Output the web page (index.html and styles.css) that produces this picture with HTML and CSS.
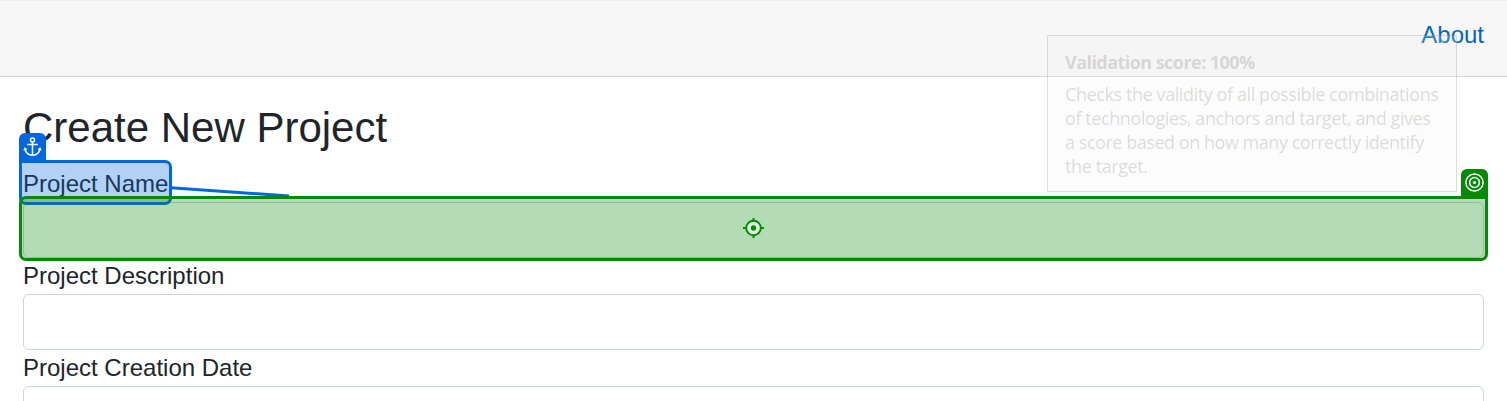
FILE: index.html
```html
<!DOCTYPE html>
<html lang="en">
<head>
<meta charset="utf-8">
<title>Create New Project</title>
<link rel="stylesheet" href="styles.css">
</head>
<body>
<header class="navbar"><a class="nav-link">About</a></header>
<main class="content">
  <h1 class="title">Create New Project</h1>
  <form class="form">
    <label class="label" for="name">Project Name</label>
    <input class="input" id="name">
    <label class="label" for="description">Project Description</label>
    <input class="input" id="description">
    <label class="label" for="date">Project Creation Date</label>
    <input class="input" id="date">
  </form>
</main>
<svg class="connector" width="1507" height="401" viewBox="0 0 1507 401"><path d="M171 187.7L289 196" stroke="#0067df" stroke-width="3"/></svg>
<div class="anchor-box"></div>
<div class="tag anchor-tag">
  <svg width="27" height="27" viewBox="0 0 27 27" fill="none" stroke="#fff" stroke-width="1.5"><circle cx="13.5" cy="7" r="2"/><path d="M13.5 9V22M8.3 11.5H18.7M6 15.6C6.6 19.8 9.6 22 13.5 22.2C17.4 22 20.4 19.8 21 15.6M5.2 17.5L6 15.4L7.8 16.6M21.8 17.5L21 15.4L19.2 16.6"/></svg>
</div>
<div class="target-box">
  <svg class="crosshair" width="24" height="24" viewBox="0 0 24 24" fill="none" stroke="#038a06" stroke-width="2"><circle cx="11.5" cy="11" r="7.3" fill="#e2f3e2"/><circle cx="11.5" cy="11" r="2.7" fill="#038a06" stroke="none"/><path d="M11.5 1V4M11.5 18V21M1 11H4.5M18.5 11H22"/></svg>
</div>
<div class="tag target-tag">
  <svg width="27" height="27" viewBox="0 0 27 27" fill="none" stroke="#fff" stroke-width="1.5"><circle cx="13.5" cy="13.5" r="8.6"/><circle cx="13.5" cy="13.5" r="4.9"/><circle cx="13.5" cy="13.5" r="1.6" fill="#fff" stroke="none"/></svg>
</div>
<aside class="tooltip">
  <strong class="tip-title">Validation score: 100%</strong>
  <p class="tip-text"><span class="l1">Checks the validity of all possible combinations</span><span class="l2">of technologies, anchors and target, and gives</span><span class="l3">a score based on how many correctly identify</span><span class="l4">the target.</span></p>
</aside>
</body>
</html>
```
FILE: styles.css
```css
* { box-sizing: border-box; }
body { height: 401px; overflow: hidden; margin: 0; background: #fff; color: #212529; font: 24px/36px "Liberation Sans", Arial, sans-serif; position: relative; }
.navbar { height: 77px; padding: 16px 23px 0; display: flex; justify-content: flex-end; background: #f7f7f7; border-top: 1px solid #f0f0f0; border-bottom: 1px solid #d4d4d4; }
.nav-link { color: #0366b8; }
.content { height: 324px; overflow: hidden; padding: 26px 23px 0; }
.title { margin: 0 0 13px; font-size: 42px; line-height: 50px; font-weight: 400; }
.form { display: flex; flex-direction: column; }
.label { height: 36px; }
.input { height: 56px; width: 100%; border: 1px solid #ced4da; border-radius: 6px; background: #fff; }
.connector { position: absolute; left: 0; top: 0; }
.anchor-box { position: absolute; left: 19px; top: 160px; width: 153px; height: 45px; border: 3px solid #0067df; border-radius: 0 7px 7px 7px; background: rgba(0, 103, 223, .3); }
.target-box { position: absolute; left: 19px; top: 196px; width: 1469px; height: 65px; display: flex; align-items: center; justify-content: center; border: 3px solid #038a06; border-radius: 7px 0 7px 7px; background: rgba(3, 138, 6, .3); }
.tag { position: absolute; width: 27px; height: 28px; border-radius: 6px 6px 0 0; }
.tag svg, .crosshair { display: block; }
.anchor-tag { left: 19px; top: 133px; background: #0067df; }
.target-tag { left: 1461px; top: 169px; background: #038a06; }
.tooltip { position: absolute; left: 1047px; top: 35px; width: 410px; height: 157px; padding: 14px 17px; border: 1px solid rgba(100, 100, 100, .2); background: rgba(240, 240, 240, .2); color: rgba(80, 80, 80, .2); font: 18px/24px "Open Sans", "Noto Sans", sans-serif; }
.tip-title, .tip-text span { display: block; width: max-content; white-space: nowrap; }
.tip-title { font-weight: 700; letter-spacing: -.55px; }
.tip-text { margin: 8px 0 0; }
.l1, .l2 { letter-spacing: -.41px; }
.l3 { letter-spacing: -.46px; }
.l4 { letter-spacing: -.4px; }
```
